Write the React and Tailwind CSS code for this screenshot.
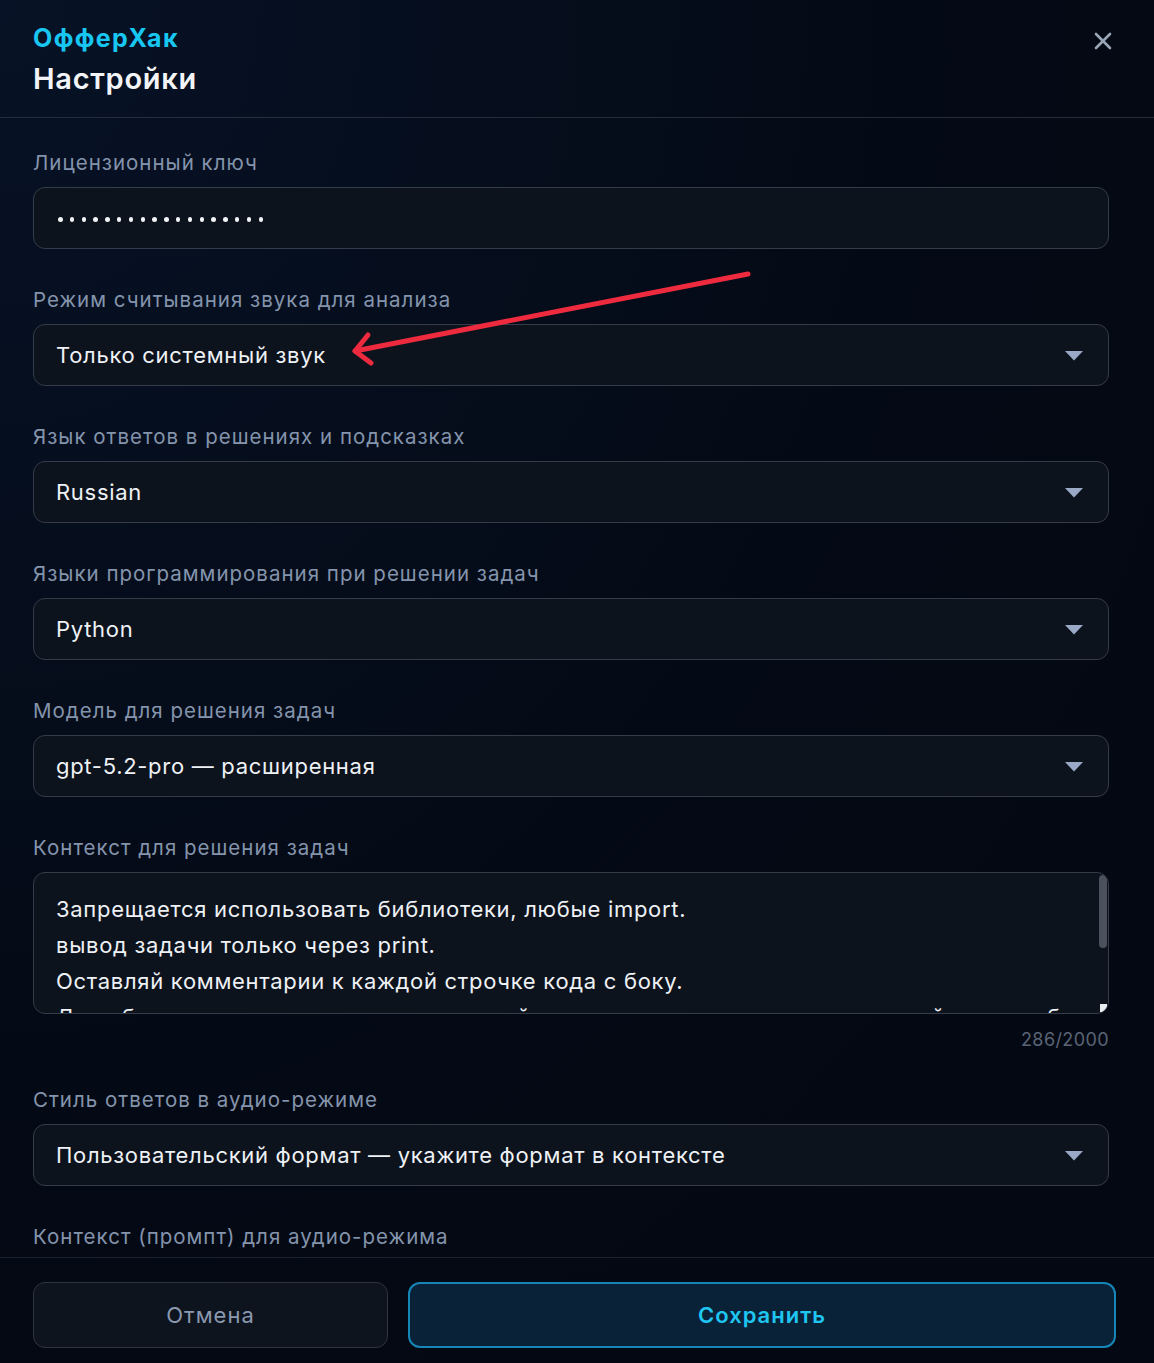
import React from "react";

function Label({ children }) {
  return (
    <div className="text-[20.5px] leading-[28px] text-[#8494ac] tracking-[1px] mb-[10px]">
      {children}
    </div>
  );
}

function Chevron() {
  return (
    <svg width="20" height="11" viewBox="0 0 20 11" className="shrink-0">
      <path d="M1 1 H19 L10 10.5 Z" fill="#9aa9c6" />
    </svg>
  );
}

function Select({ value }) {
  return (
    <div className="h-[62px] rounded-[12px] border border-[#343c49] bg-[#0d131d] flex items-center pl-[22px] pr-[24px]">
      <span className="flex-1 text-[22px] text-[#eef1f5] tracking-[0.7px]">{value}</span>
      <Chevron />
    </div>
  );
}

function Field({ label, children, className = "mb-[37px]" }) {
  return (
    <div className={className}>
      <Label>{label}</Label>
      {children}
    </div>
  );
}

export default function App() {
  return (
    <div
      className="w-[1154px] h-[1363px] overflow-hidden flex flex-col bg-[radial-gradient(ellipse_at_top_left,#071226_0%,#040a15_55%,#030812_100%)]"
      style={{ fontFamily: "Inter, 'Noto Sans', sans-serif" }}
    >
      {/* header */}
      <div className="h-[118px] shrink-0 border-b border-[#262d39] px-[33px] pt-[22px] flex justify-between">
        <div>
          <div className="text-[25px] leading-[32px] font-bold text-[#17c7f2] tracking-[1.4px]">ОфферХак</div>
          <div className="text-[29px] leading-[40px] mt-[5px] font-semibold text-[#f2f4f7] tracking-[0.7px]">Настройки</div>
        </div>
        <div className="pt-[9px] pr-[8px]">
          <svg width="20" height="20" viewBox="0 0 20 20">
            <path d="M3 3 L17 17 M17 3 L3 17" stroke="#9aa5b6" strokeWidth="2.6" strokeLinecap="round" />
          </svg>
        </div>
      </div>

      {/* body */}
      <div className="flex-1 overflow-hidden pl-[33px] pr-[45px] pt-[31px] relative">
        <Field label="Лицензионный ключ">
          <div className="h-[62px] rounded-[12px] border border-[#343c49] bg-[#0d131d] flex items-center pl-[24px] pt-[3px]">
            <span className="flex gap-[7.3px]">
              {Array.from({ length: 18 }).map((_, i) => (
                <span key={i} className="w-[4.5px] h-[4.5px] rounded-full bg-[#f2f4f7]" />
              ))}
            </span>
          </div>
        </Field>

        <Field label="Режим считывания звука для анализа">
          <Select value="Только системный звук" />
        </Field>

        <Field label="Язык ответов в решениях и подсказках">
          <Select value="Russian" />
        </Field>

        <Field label="Языки программирования при решении задач">
          <Select value="Python" />
        </Field>

        <Field label="Модель для решения задач">
          <Select value="gpt-5.2-pro — расширенная" />
        </Field>

        <Field label="Контекст для решения задач" className="">
          <div className="relative h-[142px] rounded-[12px] border border-[#343c49] bg-[#0d131d] overflow-hidden">
            <div className="pl-[22px] pr-[30px] pt-[18px] text-[22px] leading-[36px] text-[#eef1f5] tracking-[0.7px] whitespace-nowrap">
              <div>Запрещается использовать библиотеки, любые import.</div>
              <div>вывод задачи только через print.</div>
              <div>Оставляй комментарии к каждой строчке кода с боку.</div>
              <div>Для обозначения переменных используй исключительно названия на английском чтобы</div>
            </div>
            <div className="absolute right-[1px] top-[2px] w-[8px] h-[73px] rounded-[4px] bg-[#4a515d]" />
            <div className="absolute right-[1px] bottom-[1px] w-[7px] h-[8px] bg-[#e9ecf1]" />
          </div>
          <div className="text-right text-[18px] leading-[24px] mt-[14px] text-[#5a6476] tracking-[0.4px]">286/2000</div>
        </Field>

        <Field label="Стиль ответов в аудио-режиме" className="mt-[34px] mb-[37px]">
          <Select value="Пользовательский формат — укажите формат в контексте" />
        </Field>

        <Label>Контекст (промпт) для аудио-режима</Label>

        {/* annotation arrow */}
        <svg className="absolute left-0 top-0 pointer-events-none" width="1154" height="600">
          <g stroke="#ee2a3f" strokeWidth="5" strokeLinecap="round" strokeLinejoin="round" fill="none">
            <path d="M748 156 L355 233" />
            <path d="M368 217 L355 233 L371 245" />
          </g>
        </svg>
      </div>

      {/* footer */}
      <div className="h-[106px] shrink-0 border-t border-[#1c2330] pl-[33px] pr-[38px] pt-[24px] flex gap-[20px]">
        <button className="w-[355px] h-[66px] rounded-[12px] border border-[#2f3540] bg-[#0e141d] text-[22px] text-[#8a98b0] tracking-[1px]">
          Отмена
        </button>
        <button className="flex-1 h-[66px] rounded-[12px] border-2 border-[#1686b8] bg-[#0a2238] text-[22px] font-semibold text-[#1fc6f2] tracking-[1px]">
          Сохранить
        </button>
      </div>
    </div>
  );
}
